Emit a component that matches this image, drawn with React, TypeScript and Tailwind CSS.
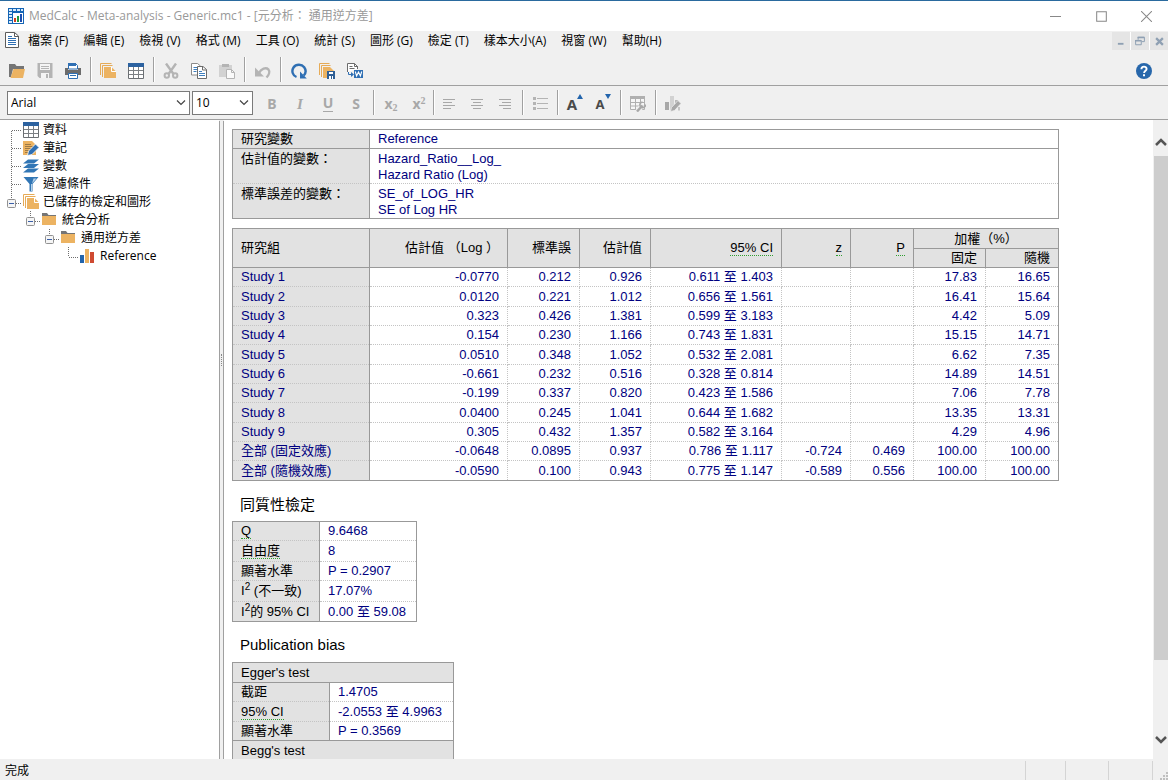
import React from 'react';

const MENU = [
  '檔案 (F)',
  '編輯 (E)',
  '檢視 (V)',
  '格式 (M)',
  '工具 (O)',
  '統計 (S)',
  '圖形 (G)',
  '檢定 (T)',
  '樣本大小(A)',
  '視窗 (W)',
  '幫助(H)',
];

const ROWS = [
  ['Study 1', '-0.0770', '0.212', '0.926', '0.611 至 1.403', '', '', '17.83', '16.65'],
  ['Study 2', '0.0120', '0.221', '1.012', '0.656 至 1.561', '', '', '16.41', '15.64'],
  ['Study 3', '0.323', '0.426', '1.381', '0.599 至 3.183', '', '', '4.42', '5.09'],
  ['Study 4', '0.154', '0.230', '1.166', '0.743 至 1.831', '', '', '15.15', '14.71'],
  ['Study 5', '0.0510', '0.348', '1.052', '0.532 至 2.081', '', '', '6.62', '7.35'],
  ['Study 6', '-0.661', '0.232', '0.516', '0.328 至 0.814', '', '', '14.89', '14.51'],
  ['Study 7', '-0.199', '0.337', '0.820', '0.423 至 1.586', '', '', '7.06', '7.78'],
  ['Study 8', '0.0400', '0.245', '1.041', '0.644 至 1.682', '', '', '13.35', '13.31'],
  ['Study 9', '0.305', '0.432', '1.357', '0.582 至 3.164', '', '', '4.29', '4.96'],
  ['全部 (固定效應)', '-0.0648', '0.0895', '0.937', '0.786 至 1.117', '-0.724', '0.469', '100.00', '100.00'],
  ['全部 (隨機效應)', '-0.0590', '0.100', '0.943', '0.775 至 1.147', '-0.589', '0.556', '100.00', '100.00'],
];

type IconProps = { children: React.ReactNode; className?: string };

const Icon = ({ children, className = 'size-4' }: IconProps) => (
  <svg viewBox="0 0 16 16" className={`shrink-0 ${className}`} fill="none" aria-hidden="true">
    {children}
  </svg>
);

const AppIcon = () => (
  <Icon>
    <path d="M0 0h16v16H0z" fill="#1565b5" />
    <path d="M1 1h3v2H1zM5 1h3v2H5zM9 1h3v2H9zM13 1h2v2h-2zM1 4h3v2H1zM1 7h3v2H1zM1 10h3v2H1zM1 13h3v2H1z" fill="#d9ebfa" />
    <path d="M5 5h10v10H5z" fill="#fff" />
    <path d="M6 10h2v4H6z" fill="#d43c1c" />
    <path d="M9 8h2v6H9z" fill="#1d9a3c" />
    <path d="M12 6h2v8h-2z" fill="#1c4fb0" />
  </Icon>
);

const DocIcon = () => (
  <Icon>
    <path d="M1.500.5h9L14.500 4v11.500h-13z" fill="#fff" stroke="#5c5c5c" />
    <path d="M10.500.5V4.500h4" stroke="#5c5c5c" />
    <path d="M4 4.500h4M4 6.500h8M4 8.500h8M4 10.500h8M4 12.500h8" stroke="#2f6fb3" />
  </Icon>
);

const OpenIcon = () => (
  <Icon>
    <path d="M0 1h6l1.500 2H15v3H4l-2 8H0z" fill="#757575" />
    <path d="M4.500 6H16L14 15H1.500z" fill="#ecb362" />
  </Icon>
);

const SaveIcon = () => (
  <Icon>
    <path d="M.5 0h15v15H2.500L.5 13z" fill="#b4b4b4" />
    <path d="M3 1h10v6H3zM4 10h8v5H4z" fill="#f4f4f4" />
    <path d="M4 3.500h8M4 5.500h8" stroke="#b4b4b4" />
    <path d="M9 11h2v4H9z" fill="#b4b4b4" />
  </Icon>
);

const PrintIcon = () => (
  <Icon>
    <path d="M3.500.5h7l2 2V6h-9z" fill="#fff" stroke="#2f6fb3" />
    <path d="M3 0h8v3H3z" fill="#2f6fb3" />
    <path d="M0 5h3v2h10V5h3v7H0z" fill="#6c6c6c" />
    <path d="M3.500 10.500h9v5h-9z" fill="#fff" stroke="#2f6fb3" />
    <path d="M5 12.500h6" stroke="#2f6fb3" />
  </Icon>
);

const PagesIcon = () => (
  <Icon>
    <path d="M.5 12V.5h11M2.500 14V2.500h10" stroke="#e6ab57" />
    <path d="M4 4h7.500L16 8.500V15H4z" fill="#ecb362" />
    <path d="M11.500 4v4.500H16" stroke="#fff" />
  </Icon>
);

const GridIcon = () => (
  <Icon>
    <path d="M.5 1h15v14.500H.5z" fill="#fff" stroke="#6b6f73" />
    <path d="M0 0h16v4H0z" fill="#2c62a0" />
    <path d="M1 7.500h14M1 11.500h14M5.500 4v11M10.500 4v11" stroke="#7c8084" />
  </Icon>
);

const CutIcon = () => (
  <Icon>
    <path d="M3 .5l7.500 10.500M13 .5L5.500 11" stroke="#b4b4b4" strokeWidth="2.400" />
    <circle cx="3.800" cy="12.500" r="2.200" stroke="#b4b4b4" strokeWidth="2" />
    <circle cx="12.200" cy="12.500" r="2.200" stroke="#b4b4b4" strokeWidth="2" />
  </Icon>
);

const CopyIcon = () => (
  <Icon>
    <path d="M.5.5h6L9.500 3v9h-9z" fill="#fff" stroke="#8a8a8a" />
    <path d="M2.500 4.500h4M2.500 6.500h4M2.500 8.500h3" stroke="#3f7fbe" />
    <path d="M6.500 3.500h5.500l3.500 3v9h-9z" fill="#fff" stroke="#6c6c6c" />
    <path d="M11.500 3.500v3.500h4" stroke="#6c6c6c" />
    <path d="M8 8.500h3M8 10.500h6M8 12.500h6" stroke="#3f7fbe" />
  </Icon>
);

const PasteIcon = () => (
  <Icon>
    <path d="M0 2h13v12H0z" fill="#d2d2d2" />
    <path d="M3 1h7v3H3z" fill="#b4b4b4" />
    <path d="M7.500 6.500h5l3 3v6h-8z" fill="#fafafa" stroke="#b4b4b4" />
    <path d="M12.500 6.500v3h3" stroke="#b4b4b4" />
  </Icon>
);

const UndoIcon = () => (
  <Icon>
    <path d="M0 4.500v9h9z" fill="#b4b4b4" />
    <path d="M4 10C6 5.500 11 4 13.300 6.300 15.200 8.500 14 12 11.500 14.500" stroke="#b4b4b4" strokeWidth="2.400" />
  </Icon>
);

const RefreshIcon = () => (
  <Icon>
    <path d="M5.500 14C1.500 12.500.3 8 2.500 4.500 5 1 10.500.8 13.200 4.200c2 2.800 1.600 6-.4 8.300" stroke="#2f6fb3" strokeWidth="2.400" />
    <path d="M9 15.500V8.500l6.800 7z" fill="#2f6fb3" />
  </Icon>
);

const PagesSaveIcon = () => (
  <Icon>
    <path d="M.5 12V.5h10M2.500 14V2.500h9" stroke="#e6ab57" />
    <path d="M4 4h7l4 4v7H4z" fill="#ecb362" />
    <path d="M8 8h8v8H8z" fill="#2f5f95" />
    <path d="M10 9h4v2h-4zM10 13h4v3h-4z" fill="#fff" />
    <path d="M12 13h1v3h-1z" fill="#2f5f95" />
  </Icon>
);

const WordIcon = () => (
  <Icon>
    <path d="M.5 9V.5h7L10.500 3.500V6" fill="#fff" stroke="#6c6c6c" />
    <path d="M7.500.5v3H11M2.500 3.500h3M2.500 5.500h5" stroke="#6c6c6c" />
    <path d="M1.500 9v2.500h4" stroke="#2f6fb3" />
    <path d="M4 9l3 2.500L4 14z" fill="#2f6fb3" />
    <path d="M7 7h9v8H7z" fill="#2f6fb3" />
    <path d="M8.300 8.500l1.300 4.500 1.900-4 1.900 4 1.300-4.500" stroke="#fff" strokeWidth="1.100" />
  </Icon>
);

const HelpIcon = () => (
  <Icon>
    <circle cx="8" cy="8" r="8" fill="#2767ab" />
    <path d="M5.400 6.200C5.400 2.800 10.600 2.800 10.600 6c0 1.700-2.500 1.900-2.500 4" stroke="#fff" strokeWidth="1.900" />
    <path d="M7 11.200h2v2H7z" fill="#fff" />
  </Icon>
);

const AlignIcon = ({ d }: { d: string }) => (
  <Icon>
    <path d={d} stroke="#a8a8a8" />
  </Icon>
);

const ListIcon = () => (
  <Icon>
    <path d="M5 2.500h11M5 7.500h11M5 12.500h11" stroke="#b4b4b4" />
    <path d="M1 1h3v3H1zM1 6h3v3H1zM1 11h3v3H1z" fill="#b4b4b4" />
  </Icon>
);

const TableToolIcon = () => (
  <Icon>
    <path d="M.5.5h14v13H.5z" fill="#f6f6f6" stroke="#b0b0b0" />
    <path d="M0 0h15v3H0z" fill="#b0b0b0" />
    <path d="M.5 6.500h14M.5 10h14M5.500 3v10.500M10.500 3v10.500" stroke="#b0b0b0" />
    <path d="M7.500 15L13 9" stroke="#f0f0f0" strokeWidth="5" />
    <path d="M7 15.500L12.500 9.500" stroke="#a8a8a8" strokeWidth="2.400" />
    <path d="M15.500 8.500A2.800 2.800 0 1 1 12.500 6" stroke="#a8a8a8" strokeWidth="1.700" />
  </Icon>
);

const ChartEditIcon = () => (
  <Icon>
    <path d="M0 6h4v8H0z" fill="#a8a8a8" />
    <path d="M5 0h4v14H5z" fill="#d2d2d2" />
    <path d="M10 4h3v3h-3z" fill="#b8b8b8" />
    <path d="M5.500 15.500l1-4L13 4.500l3 3-6.500 7z" fill="#a8a8a8" stroke="#f0f0f0" strokeWidth=".7" />
    <path d="M14 11v3.500" stroke="#b8b8b8" strokeWidth="1.500" />
  </Icon>
);

const FontSizeIcon = ({ up }: { up?: boolean }) => (
  <span className="flex items-start font-bold text-[#4a4a4a]">
    <span className={up ? 'text-[15px] leading-5' : 'text-[13px] leading-5'}>A</span>
    <svg viewBox="0 0 6 5" className="h-[5px] w-[6px]" aria-hidden="true">
      <path d={up ? 'M3 0l3 5H0z' : 'M0 0h6L3 5z'} fill="#2264ac" />
    </svg>
  </span>
);

const NoteIcon = () => (
  <Icon>
    <path d="M0 1h9l4 4v10H0z" fill="#ecb362" />
    <path d="M2 4.500h6M2 6.500h8M2 8.500h6M2 10.500h4M2 12.500h3" stroke="#9c7a48" />
    <path d="M4.500 15.500l1-4.500 7-7 3.500 3.500-7 7z" fill="#2f6fb3" stroke="#fff" strokeWidth=".8" />
  </Icon>
);

const LayersIcon = () => (
  <Icon>
    <path d="M5 1.500h11L11 5.500H0zM5 6h11l-5 4H0zM5 10.500h11l-5 4H0z" fill="#3176b5" />
  </Icon>
);

const FilterIcon = () => (
  <Icon>
    <path d="M.5 1h15L9.500 8v7.500h-3V8z" fill="#3176b5" />
    <path d="M10.500 2.500h3L9 7.500" fill="#b6d2ea" />
    <path d="M8.500 8v7" stroke="#b6d2ea" />
  </Icon>
);

const FolderIcon = () => (
  <Icon>
    <path d="M0 1h5l1.500 2H14v2H0z" fill="#757575" />
    <path d="M0 4h14v9H0z" fill="#ecb362" />
  </Icon>
);

const BarsIcon = () => (
  <Icon>
    <path d="M0 7h4v8H0z" fill="#2264ac" />
    <path d="M5 1h4v14H5z" fill="#ecb362" />
    <path d="M10 4h4v11h-4z" fill="#cf4a32" />
  </Icon>
);

const ToolButton = ({ label, children }: { label: string; children: React.ReactNode }) => (
  <button type="button" aria-label={label} className="flex h-7 w-7 shrink-0 items-center justify-center pt-[2px]">
    {children}
  </button>
);

const Sep = ({ className = 'w-[7px]' }: { className?: string }) => (
  <span className={`flex h-[25px] shrink-0 justify-center ${className}`}>
    <span className="w-px bg-[#a0a0a0]" />
    <span className="w-px bg-white" />
  </span>
);

const Picker = ({ label, value, className }: { label: string; value: string; className: string }) => (
  <div className={`relative h-6 ${className}`}>
    <select
      aria-label={label}
      defaultValue={value}
      className="h-full w-full appearance-none border border-[#7a7a7a] bg-white pl-[3px] text-[12px] leading-5 text-black"
    >
      <option>{value}</option>
    </select>
    <svg viewBox="0 0 10 6" className="pointer-events-none absolute top-[9px] right-1 h-[6px] w-[10px]" fill="none" aria-hidden="true">
      <path d="M1 .5l4 4 4-4" stroke="#444" strokeWidth="1.200" />
    </svg>
  </div>
);

type NodeProps = {
  label: string;
  icon: React.ReactNode;
  line?: string;
  box?: boolean;
  children?: React.ReactNode;
};

// line is the dotted connector inside the 19x18 cell left of the icon
const TreeNode = ({ label, icon, line = 'M8.500 0v18M9 9.500h10', box, children }: NodeProps) => (
  <li>
    <div className="flex h-[18px] items-center">
      <svg viewBox="0 0 19 18" className="mr-px h-[18px] w-[19px] shrink-0" fill="none" aria-hidden="true">
        <path d={line} stroke="#6e6e6e" strokeDasharray="1 1" />
        {box && (
          <>
            <rect x="4.500" y="6.500" width="8" height="8" rx="1" fill="#f5f5f5" stroke="#919191" />
            <path d="M6 10.500h5" stroke="#3a5fa8" />
          </>
        )}
      </svg>
      {icon}
      <span className="ml-1 whitespace-nowrap">{label}</span>
    </div>
    {children && <ul className="pl-[19px]">{children}</ul>}
  </li>
);

const Term = ({ children }: { children: React.ReactNode }) => (
  <span className="border-b border-dotted border-b-[#2f9e2f]">{children}</span>
);

const tableClass = 'table-fixed border-collapse border border-[#999] text-[13px] leading-4';
const headClass = 'border border-[#999] bg-[#e2e2e2] px-2 py-0 font-normal';
const labelClass =
  'border-r border-r-[#999] border-b border-b-[#c4c4c4] [border-bottom-style:dotted] bg-[#e2e2e2] px-2 py-0 text-left font-normal whitespace-nowrap';
const cellClass = 'border-b border-dotted border-[#c4c4c4] px-2 py-0 text-[#000080] whitespace-nowrap';

const App = () => {
  return (
    <div className="flex h-screen flex-col overflow-hidden bg-[#f0f0f0] font-['Open_Sans','Noto_Sans_CJK_TC',sans-serif] text-[12px] text-black">
      <header className="flex h-[31px] shrink-0 items-center border-t border-[#2a6a9e] bg-white pl-2">
        <AppIcon />
        <h1 className="ml-[5px] grow text-[#999]">MedCalc - Meta-analysis - Generic.mc1 - [元分析： 通用逆方差]</h1>
        <button type="button" aria-label="Minimize" className="flex w-[46px] justify-center">
          <Icon className="size-[11px]"><path d="M0 8h16" stroke="#888" strokeWidth="1.500" /></Icon>
        </button>
        <button type="button" aria-label="Maximize" className="flex w-[46px] justify-center">
          <Icon className="size-[11px]"><path d="M1 1h14v14H1z" stroke="#888" strokeWidth="1.500" /></Icon>
        </button>
        <button type="button" aria-label="Close" className="flex w-[44px] justify-center">
          <Icon className="size-[11px]"><path d="M0 0l16 16M16 0L0 16" stroke="#888" strokeWidth="1.500" /></Icon>
        </button>
      </header>

      <nav className="flex h-[23px] shrink-0 items-start pl-1">
        <div className="mt-px mr-2 flex"><DocIcon /></div>
        <div className="flex grow gap-[15px]">
          {MENU.map((item) => (
            <button key={item} type="button" className="leading-5 whitespace-nowrap">
              {item}
            </button>
          ))}
        </div>
        <div className="mt-px flex gap-px bg-white text-[#8fa0b3]">
          <button type="button" aria-label="Minimize document" className="flex size-[18px] items-center justify-center bg-[#e5e5e5]">
            <Icon className="size-[10px]"><path d="M3 12.500h9" stroke="currentColor" strokeWidth="3" /></Icon>
          </button>
          <button type="button" aria-label="Restore document" className="flex size-[18px] items-center justify-center bg-[#e5e5e5]">
            <Icon className="size-[10px]">
              <path d="M1 7h9v7H1zM5 6V2h10v7h-4" stroke="currentColor" strokeWidth="1.600" />
              <path d="M4 2.500h11M0 7.500h10" stroke="currentColor" strokeWidth="2.500" />
            </Icon>
          </button>
          <button type="button" aria-label="Close document" className="flex size-[18px] items-center justify-center bg-[#e5e5e5]">
            <Icon className="size-[9px]"><path d="M2 2l12 12M14 2L2 14" stroke="currentColor" strokeWidth="4" /></Icon>
          </button>
        </div>
      </nav>

      <div className="flex h-8 shrink-0 items-center border-b border-[#a0a0a0] pr-[10px] pl-[3px]">
        <ToolButton label="Open"><OpenIcon /></ToolButton>
        <ToolButton label="Save"><SaveIcon /></ToolButton>
        <ToolButton label="Print"><PrintIcon /></ToolButton>
        <Sep />
        <ToolButton label="Contents"><PagesIcon /></ToolButton>
        <ToolButton label="Spreadsheet"><GridIcon /></ToolButton>
        <Sep />
        <ToolButton label="Cut"><CutIcon /></ToolButton>
        <ToolButton label="Copy"><CopyIcon /></ToolButton>
        <ToolButton label="Paste"><PasteIcon /></ToolButton>
        <Sep className="w-2" />
        <ToolButton label="Undo"><UndoIcon /></ToolButton>
        <Sep className="w-2" />
        <ToolButton label="Recalculate"><RefreshIcon /></ToolButton>
        <ToolButton label="Save report"><PagesSaveIcon /></ToolButton>
        <ToolButton label="Export to Word"><WordIcon /></ToolButton>
        <span className="grow" />
        <ToolButton label="Help"><HelpIcon /></ToolButton>
      </div>

      <div className="flex h-[34px] shrink-0 items-center border-b border-[#a0a0a0] pl-[7px]">
        <Picker label="Font" value="Arial" className="mr-[2px] w-[183px]" />
        <Picker label="Font size" value="10" className="mr-[5px] w-[61px]" />
        <div className="flex items-center font-['Noto_Sans',sans-serif] text-[14px] leading-4 font-bold text-[#a8a8a8]">
          <ToolButton label="Bold">B</ToolButton>
          <ToolButton label="Italic"><span className="font-['Liberation_Serif',serif] text-[15px] italic">I</span></ToolButton>
          <ToolButton label="Underline"><span className="border-b border-[#a8a8a8]">U</span></ToolButton>
          <ToolButton label="Strikeout">S</ToolButton>
          <Sep />
          <ToolButton label="Subscript"><span>x<sub className="font-['Liberation_Serif',serif] text-[10px]">2</sub></span></ToolButton>
          <ToolButton label="Superscript"><span>x<sup className="font-['Liberation_Serif',serif] text-[10px]">2</sup></span></ToolButton>
          <Sep className="w-[2px]" />
          <ToolButton label="Align left"><AlignIcon d="M2 3.500h12M2 6.500h9M2 9.500h12M2 12.500h8" /></ToolButton>
          <ToolButton label="Align center"><AlignIcon d="M2 3.500h12M4 6.500h8M2 9.500h12M4 12.500h8" /></ToolButton>
          <ToolButton label="Align right"><AlignIcon d="M2 3.500h12M5 6.500h9M2 9.500h12M6 12.500h8" /></ToolButton>
          <Sep />
          <ToolButton label="List"><ListIcon /></ToolButton>
          <Sep />
          <ToolButton label="Larger font"><FontSizeIcon up /></ToolButton>
          <ToolButton label="Smaller font"><FontSizeIcon /></ToolButton>
          <Sep />
          <ToolButton label="Format table"><TableToolIcon /></ToolButton>
          <Sep />
          <ToolButton label="Edit graph"><ChartEditIcon /></ToolButton>
        </div>
      </div>

      <div className="flex min-h-0 grow">
        <aside className="w-[219px] shrink-0 overflow-hidden bg-white pt-px pl-[3px]">
          <ul>
            <TreeNode label="資料" icon={<GridIcon />} line="M8.500 10v8M9 9.500h10" />
            <TreeNode label="筆記" icon={<NoteIcon />} />
            <TreeNode label="變數" icon={<LayersIcon />} />
            <TreeNode label="過濾條件" icon={<FilterIcon />} />
            <TreeNode label="已儲存的檢定和圖形" icon={<PagesIcon />} line="M8.500 0v6M13 10.500h6" box>
              <TreeNode label="統合分析" icon={<FolderIcon />} line="M8.500 0v6M13 10.500h6" box>
                <TreeNode label="通用逆方差" icon={<FolderIcon />} line="M8.500 0v6M13 10.500h6" box>
                  <TreeNode label="Reference" icon={<BarsIcon />} line="M8.500 0v10M9 10.500h10" />
                </TreeNode>
              </TreeNode>
            </TreeNode>
          </ul>
        </aside>
        <div className="mt-px flex w-[5px] shrink-0 items-center justify-center border-x border-[#a0a0a0]">
          <span className="mb-[160px] h-3 border-l border-dotted border-[#888]" />
        </div>

        <main className="grow overflow-hidden bg-white pt-[9px] pl-2 font-['Liberation_Sans','Noto_Sans_CJK_TC',sans-serif]">
          <table className={`${tableClass} mb-[9px] w-[827px]`}>
            <colgroup>
              <col className="w-[137px]" />
              <col />
            </colgroup>
            <tbody>
              <tr className="h-[19px]">
                <th className="border border-[#999] bg-[#e2e2e2] px-2 py-0 text-left font-normal">研究變數</th>
                <td className="border border-[#999] px-2 py-0 text-[#000080]">Reference</td>
              </tr>
              <tr className="h-[35px] align-top">
                <th className={labelClass}><div className="pt-[2px]">估計值的變數：</div></th>
                <td className={cellClass}><div className="pt-[2px]">Hazard_Ratio__Log_<br />Hazard Ratio (Log)</div></td>
              </tr>
              <tr className="h-[35px] align-top">
                <th className={labelClass}><div className="pt-[2px]">標準誤差的變數：</div></th>
                <td className={cellClass}><div className="pt-[2px]">SE_of_LOG_HR<br />SE of Log HR</div></td>
              </tr>
            </tbody>
          </table>

          <table className={`${tableClass} w-[827px] text-right`}>
            <colgroup>
              <col className="w-[137px]" />
              <col className="w-[138px]" />
              <col className="w-[72px]" />
              <col className="w-[71px]" />
              <col className="w-[131px]" />
              <col className="w-[69px]" />
              <col className="w-[63px]" />
              <col className="w-[72px]" />
              <col />
            </colgroup>
            <thead>
              <tr className="h-5">
                <th rowSpan={2} className={`${headClass} text-left`}>研究組</th>
                <th rowSpan={2} className={headClass}>估計值 （Log ）</th>
                <th rowSpan={2} className={headClass}>標準誤</th>
                <th rowSpan={2} className={headClass}>估計值</th>
                <th rowSpan={2} className={headClass}><Term>95% CI</Term></th>
                <th rowSpan={2} className={headClass}><Term>z</Term></th>
                <th rowSpan={2} className={headClass}><Term>P</Term></th>
                <th colSpan={2} className={`${headClass} text-center`}>加權（%）</th>
              </tr>
              <tr className="h-[19px]">
                <th className={headClass}>固定</th>
                <th className={headClass}>隨機</th>
              </tr>
            </thead>
            <tbody>
              {ROWS.map((row) => (
                <tr key={row[0]} className="h-[19px] nth-[3n+2]:h-5">
                  <th className={`${labelClass} text-[#000080]`}>{row[0]}</th>
                  {row.slice(1).map((value, i) => (
                    <td key={i} className={`${cellClass} border-r`}>{value}</td>
                  ))}
                </tr>
              ))}
            </tbody>
          </table>

          <h2 className="flex h-10 items-center pt-2 pl-2 text-[15px]">同質性檢定</h2>
          <table className={`${tableClass} w-[185px]`}>
            <colgroup>
              <col className="w-[87px]" />
              <col />
            </colgroup>
            <tbody>
              <tr className="h-[19px]"><th className={labelClass}><Term>Q</Term></th><td className={cellClass}>9.6468</td></tr>
              <tr className="h-[21px]"><th className={labelClass}><Term>自由度</Term></th><td className={cellClass}>8</td></tr>
              <tr className="h-[19px]"><th className={labelClass}>顯著水準</th><td className={cellClass}>P = 0.2907</td></tr>
              <tr className="h-[21px]"><th className={labelClass}>I<sup className="text-[10px]">2</sup> (不一致)</th><td className={cellClass}>17.07%</td></tr>
              <tr className="h-5"><th className={labelClass}>I<sup className="text-[10px]">2</sup>的 95% CI</th><td className={cellClass}>0.00 至 59.08</td></tr>
            </tbody>
          </table>

          <h2 className="flex h-10 items-center pt-[6px] pl-2 text-[15px]">Publication bias</h2>
          <table className={`${tableClass} w-[222px]`}>
            <colgroup>
              <col className="w-[97px]" />
              <col />
            </colgroup>
            <tbody>
              <tr className="h-5"><th colSpan={2} className={`${headClass} text-left`}>Egger's test</th></tr>
              <tr className="h-[19px]"><th className={labelClass}>截距</th><td className={cellClass}>1.4705</td></tr>
              <tr className="h-5"><th className={labelClass}><Term>95% CI</Term></th><td className={cellClass}>-2.0553 至 4.9963</td></tr>
              <tr className="h-[19px]"><th className={labelClass}>顯著水準</th><td className={cellClass}>P = 0.3569</td></tr>
              <tr className="h-5"><th colSpan={2} className={`${headClass} text-left`}>Begg's test</th></tr>
            </tbody>
          </table>
        </main>

        <div className="flex w-[15px] shrink-0 flex-col items-center bg-[#f0f0f0] pl-px">
          <button type="button" aria-label="Scroll up" className="flex h-9 items-center pt-2">
            <svg viewBox="0 0 12 9" className="h-[9px] w-3" fill="none" aria-hidden="true">
              <path d="M1 7l5-5 5 5" stroke="#555" strokeWidth="2.500" />
            </svg>
          </button>
          <div className="flex w-full grow flex-col">
            <div className="grow-[179] bg-[#cdcdcd]" />
            <div className="grow-[21]" />
          </div>
          <button type="button" aria-label="Scroll down" className="flex h-10 items-center">
            <svg viewBox="0 0 12 9" className="h-[9px] w-3" fill="none" aria-hidden="true">
              <path d="M1 2l5 5 5-5" stroke="#555" strokeWidth="2.500" />
            </svg>
          </button>
        </div>
      </div>

      <footer className="flex h-[21px] shrink-0 justify-end pt-[2px]">
        <span className="grow pl-[5px] leading-5">完成</span>
        <span className="w-10 border-l border-[#d4d4d4]" />
        <span className="w-[43px] border-l border-[#d4d4d4]" />
        <span className="w-11 border-l border-[#d4d4d4]" />
        <span className="flex w-4 items-end justify-end border-l border-[#d4d4d4]">
          <svg viewBox="0 0 8 8" className="size-2" fill="#bfbfbf" aria-hidden="true">
            <path d="M0 6h2v2H0zM3 6h2v2H3zM6 6h2v2H6zM3 3h2v2H3zM6 3h2v2H6zM6 0h2v2H6z" />
          </svg>
        </span>
      </footer>
    </div>
  );
};

export default App;
